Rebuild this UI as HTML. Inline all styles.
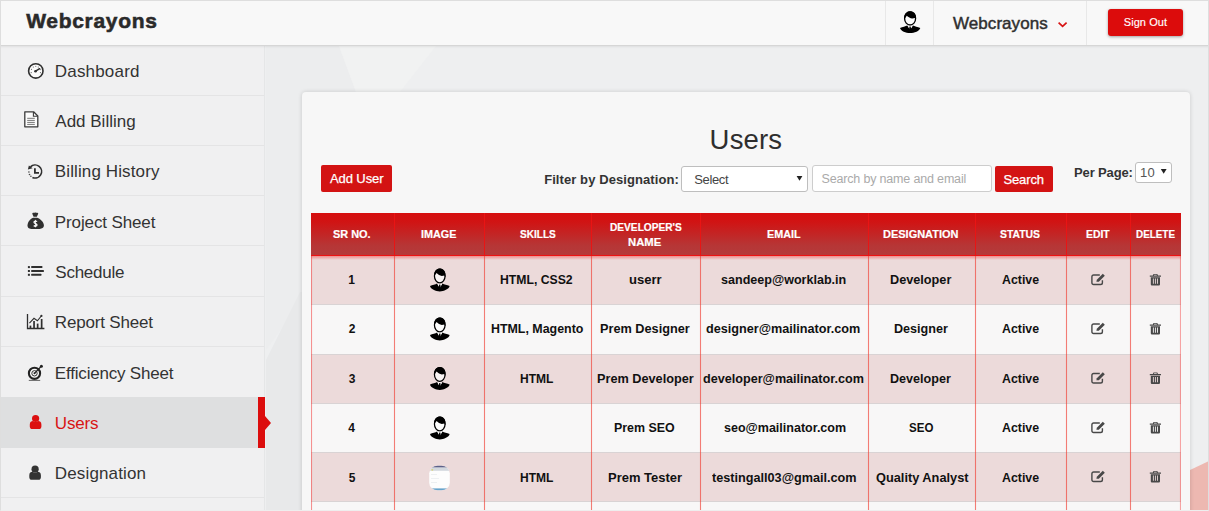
<!DOCTYPE html>
<html>
<head>
<meta charset="utf-8">
<title>Users</title>
<style>
*{box-sizing:border-box;margin:0;padding:0}
html,body{width:1209px;height:511px;overflow:hidden}
body{font-family:"Liberation Sans",sans-serif;background:#eeeff0;position:relative;color:#333}
.t{position:absolute;white-space:nowrap;z-index:20;font-family:"Liberation Sans",sans-serif}
#frame{position:absolute;left:0;top:0;width:1209px;height:511px;border:1px solid #dedede;border-bottom-color:#eee;z-index:60}
#bg{position:absolute;left:0;top:0;width:1209px;height:511px;z-index:0}
#top{position:absolute;left:0;top:0;width:1209px;height:46px;background:#f8f8f8;border-bottom:1px solid #d6d6d6;box-shadow:0 1px 2px rgba(0,0,0,.07);z-index:10}
.vsep{position:absolute;top:0;width:1px;height:45px;background:#e8e8e8}
#signout{position:absolute;left:1108px;top:9px;width:75px;height:27px;background:#dc0c0c;border-radius:3px;box-shadow:0 1px 3px rgba(0,0,0,.35)}
#side{position:absolute;left:0;top:46px;width:265px;height:465px;background:#f0f0f1;border-right:1px solid #e5e6e7;z-index:5}
.sb{position:absolute;left:0;width:264px;height:1px;background:#e4e4e5}
#act{position:absolute;left:0;top:351px;width:259px;height:51px;background:#dedfe0}
#actbar{position:absolute;left:258px;top:351px;width:7px;height:51px;background:#dc0d0d}
#acttri{position:absolute;left:265px;top:370px;width:0;height:0;border-left:6px solid #dc0d0d;border-top:7px solid transparent;border-bottom:7px solid transparent;z-index:7}
#card{position:absolute;left:302px;top:92px;width:888px;height:430px;background:#f7f7f7;border-radius:4px;box-shadow:0 0 4px rgba(0,0,0,.16);z-index:4}
.btn{position:absolute;background:#d31313;border-radius:2px;z-index:6}
.inp{position:absolute;background:#fff;border:1px solid #bebebe;border-radius:3px;z-index:6}
#tbl{position:absolute;left:311px;top:213px;width:870px;height:298px;z-index:6;overflow:hidden}
#thead{position:absolute;left:0;top:0;width:870px;height:42px;background:linear-gradient(#d60e0e 0%,#d01414 22%,#b63636 78%,#b53a3a 100%)}
#thline{position:absolute;left:0;top:42px;width:870px;height:1px;background:#ee1212}
#thsh{position:absolute;left:0;top:43px;width:870px;height:4px;background:linear-gradient(rgba(238,80,80,.55),rgba(238,120,120,0));z-index:7}
.row{position:absolute;left:0;width:870px}
.odd{background:#ecdada}
.even{background:#f8f7f7}
.hl{position:absolute;left:0;width:870px;height:1px;background:#d9d3d4;z-index:7}
.vh{position:absolute;top:0;width:1px;height:43px;background:#ea1414;z-index:9}
.vl{position:absolute;top:43px;width:1px;height:255px;background:rgba(240,60,50,.66);box-shadow:0 0 1px rgba(240,100,90,.4);z-index:8}
svg{position:absolute;z-index:21;overflow:visible}
</style>
</head>
<body>
<svg id="bg" width="1209" height="511" viewBox="0 0 1209 511">
  <rect width="1209" height="511" fill="#eeeff0"/>
  <polygon points="266,46 339,46 356,92 302,92 302,300 266,350" fill="#ecedee"/>
  <polygon points="339,46 436,46 400,92 356,92" fill="#f1f2f2"/>
  <polygon points="266,360 300,292 302,292 302,511 266,511" fill="#e8e9ea"/>
  <polygon points="1190,470 1209,461 1209,511 1190,511" fill="#edb8b1"/>
</svg>
<div id="frame"></div>
<div id="top">
  <div class="vsep" style="left:885px"></div>
  <div class="vsep" style="left:933px"></div>
  <div class="vsep" style="left:1086px"></div>
  <div id="signout"></div>
</div>
<div id="side">
  <div id="act"></div>
  <div id="actbar"></div>
  <div class="sb" style="top:49px"></div>
  <div class="sb" style="top:99px"></div>
  <div class="sb" style="top:149px"></div>
  <div class="sb" style="top:199px"></div>
  <div class="sb" style="top:250px"></div>
  <div class="sb" style="top:300px"></div>
  <div class="sb" style="top:451px"></div>
</div>
<div id="acttri" style="top:416px"></div>
<div id="card"></div>
<div class="btn" style="left:321px;top:165px;width:71px;height:27px"></div>
<div class="inp" style="left:681px;top:166px;width:127px;height:26px"></div>
<div class="inp" style="left:812px;top:165px;width:180px;height:27px;border-color:#cdcdcd"></div>
<div class="btn" style="left:995px;top:166px;width:58px;height:26px"></div>
<div class="inp" style="left:1135px;top:162px;width:37px;height:21px"></div>
<div id="tbl">
  <div id="thead"></div><div id="thline"></div><div id="thsh"></div>
  <div class="row odd" style="top:43px;height:49px"></div>
  <div class="row even" style="top:92px;height:49px"></div>
  <div class="row odd" style="top:141px;height:50px"></div>
  <div class="row even" style="top:191px;height:49px"></div>
  <div class="row odd" style="top:240px;height:49px"></div>
  <div class="row even" style="top:289px;height:49px"></div>
  <div class="hl" style="top:91px"></div>
  <div class="hl" style="top:141px"></div>
  <div class="hl" style="top:190px"></div>
  <div class="hl" style="top:239px"></div>
  <div class="hl" style="top:288px"></div>
  <div class="vh" style="left:83px"></div>
  <div class="vh" style="left:173px"></div>
  <div class="vh" style="left:280px"></div>
  <div class="vh" style="left:389px"></div>
  <div class="vh" style="left:557px"></div>
  <div class="vh" style="left:664px"></div>
  <div class="vh" style="left:755px"></div>
  <div class="vh" style="left:819px"></div>
  <div class="vl" style="left:0;background:rgba(243,60,60,.55)"></div>
  <div class="vl" style="left:83px"></div>
  <div class="vl" style="left:173px"></div>
  <div class="vl" style="left:280px"></div>
  <div class="vl" style="left:389px"></div>
  <div class="vl" style="left:557px"></div>
  <div class="vl" style="left:664px"></div>
  <div class="vl" style="left:755px"></div>
  <div class="vl" style="left:819px"></div>
  <div class="vl" style="left:869px;background:rgba(243,60,60,.45)"></div>
</div>
<svg id="ico" width="1209" height="511" viewBox="0 0 1209 511" style="left:0;top:0">
<defs>
  <g id="av">
    <!-- avatar in local coords: width 20.4 (0..20.4), height 21.6 (0..21.6) -->
    <ellipse cx="10.1" cy="7.1" rx="5.5" ry="6.5" fill="#fff" fill-opacity=".7" stroke="#000" stroke-width="1.3"/>
    <path d="M4.3,8.4 C3.4,1.6 7.6,-0.1 10.1,-0.1 C13.2,-0.1 17,1.8 15.9,8.4 L14.9,6.6 L12.2,7 C10.3,6.8 8.3,5.7 6.8,4.3 C5.7,5.4 4.9,6.9 4.3,8.4 Z" fill="#000"/>
    <path d="M0,16.6 C2.6,15.5 5.6,15.1 7.3,14.2 L10.1,18 L12.9,14.2 C14.6,15.1 17.6,15.5 20.3,16.6 C19.6,19.6 14.4,21.6 10.1,21.6 C5.8,21.6 0.7,19.6 0,16.6 Z" fill="#000"/>
    <path d="M7.6,14.3 L10.1,18.6 L12.6,14.3 L11.4,14.9 L10.1,14.4 L8.8,14.9 Z" fill="#fff"/>
    <path d="M9.5,15.1 h1.2 l0.5,3.3 l-1.1,1.1 l-1.1,-1.1 z" fill="#000"/>
  </g>
  <g id="usr">
    <!-- FA user-like: local 0..11.6 x 0..14.2 -->
    <circle cx="5.8" cy="3.6" r="3.6"/>
    <path d="M0,9.6 C0,6.9 1.6,6.1 3.2,6.1 C4,6.7 4.8,7.1 5.8,7.1 C6.8,7.1 7.6,6.7 8.4,6.1 C10,6.1 11.6,6.9 11.6,9.6 V11.6 C11.6,13.3 10.5,14.2 9.2,14.2 H2.4 C1.1,14.2 0,13.3 0,11.6 Z"/>
  </g>
  <g id="edit" fill="none" stroke="#484848">
    <!-- local 0..14.3 x 0..11.5 -->
    <path d="M11.2,6.8 V9.2 C11.2,10.3 10.4,11 9.4,11 H2.4 C1.4,11 0.7,10.3 0.7,9.2 V3.2 C0.7,2.2 1.4,1.5 2.4,1.5 H8.6" stroke-width="1.4"/>
    <path d="M5.2,8.3 L5.6,6.2 L11.6,0.3 L13.6,2.3 L7.6,8.2 Z" fill="#484848" stroke="none"/>
  </g>
  <g id="trash" fill="#484848">
    <path d="M3.7,0 h3.8 l0.7,1.5 h3 v1.4 h-11.2 v-1.4 h3 z M4.4,0.8 l-0.3,0.7 h3 l-0.3,-0.7 z" fill-rule="evenodd"/>
    <path d="M1,3.4 h9.2 v6.9 c0,0.8 -0.6,1.3 -1.3,1.3 h-6.6 c-0.7,0 -1.3,-0.5 -1.3,-1.3 z M3.1,4.6 v5.2 h0.9 v-5.2 z M5.15,4.6 v5.2 h0.9 v-5.2 z M7.2,4.6 v5.2 h0.9 v-5.2 z" fill-rule="evenodd"/>
  </g>
</defs>
<!-- top bar -->
<use href="#av" transform="translate(900,11.4)"/>
<path d="M1058.6,22.6 L1062.6,26.4 L1066.6,22.6" fill="none" stroke="#d81414" stroke-width="1.7"/>
<!-- sidebar: dashboard -->
<circle cx="35.8" cy="70.9" r="7.2" fill="#fbfbfb" stroke="#2f2f2f" stroke-width="1.6"/>
<g fill="#555"><circle cx="31.2" cy="72.6" r=".55"/><circle cx="31.5" cy="69.3" r=".55"/><circle cx="33.3" cy="67" r=".55"/><circle cx="35.8" cy="66.2" r=".55"/><circle cx="38.3" cy="67" r=".55"/><circle cx="40.4" cy="72.6" r=".55"/><circle cx="40.2" cy="69.6" r=".55"/></g>
<path d="M35.6,71.2 L39.6,68.7" stroke="#2f2f2f" stroke-width="1.5" stroke-linecap="round"/>
<circle cx="35.5" cy="71.2" r="1.3" fill="#2f2f2f"/>
<!-- add billing doc -->
<path d="M24.8,111.8 H33.6 L37.8,116 V126.8 H24.8 Z" fill="#fcfcfc" stroke="#3a3a3a" stroke-width="1.3" stroke-linejoin="round"/>
<path d="M33.4,112 V116.3 H37.7" fill="none" stroke="#3a3a3a" stroke-width="1.1"/>
<g stroke="#666" stroke-width=".9"><path d="M27.2,118.3 H34.8"/><path d="M27.2,120.4 H34.8"/><path d="M27.2,122.4 H34.8"/><path d="M27.2,124.4 H34.8"/></g>
<!-- billing history -->
<path d="M30.5,166.9 A6.5,6.5 0 1 1 32.4,177.4" fill="none" stroke="#2f2f2f" stroke-width="1.6"/>
<path d="M27.9,169.6 L28.9,165.4 L32.6,168.3 Z" fill="#2f2f2f"/>
<g fill="#444"><circle cx="28.9" cy="172" r=".8"/><circle cx="29.5" cy="174.5" r=".8"/><circle cx="30.9" cy="176.3" r=".8"/></g>
<path d="M34.9,168.2 V172.8 H39" fill="none" stroke="#2f2f2f" stroke-width="1.8"/>
<!-- project sheet money bag -->
<path d="M32.2,213.4 C33.4,212.2 34.4,213.4 35.2,212.3 C36,213.4 37,212.2 38.3,213.4 C37.8,214.8 37.2,215.8 36.8,216.8 H33.6 C33.2,215.8 32.6,214.8 32.2,213.4 Z" fill="#2f2f2f"/>
<path d="M33.2,217.8 H37.2 C40.8,219 43.9,222.4 43.9,225.6 C43.9,228 42,228.9 39.6,228.9 H31.2 C28.6,228.9 27.5,227.6 27.5,225.6 C27.5,222.4 29.8,219 33.2,217.8 Z" fill="#2f2f2f"/>
<path d="M37,221.7 C36.3,220.9 34,220.8 34,222.3 C34,223.9 37,223.3 37,225 C37,226.5 34.5,226.4 33.8,225.5" fill="none" stroke="#fff" stroke-width="1.25"/><path d="M35.5,219.9 V227.3" stroke="#fff" stroke-width=".8"/>
<!-- schedule list -->
<g fill="#2f2f2f"><rect x="27.9" y="266.1" width="2" height="2"/><rect x="27.9" y="270" width="2" height="2"/><rect x="27.9" y="273.8" width="2" height="2"/>
<rect x="31.2" y="266.1" width="11.2" height="2" rx=".5"/><rect x="31.2" y="270" width="12.7" height="2" rx=".5"/><rect x="31.2" y="273.8" width="10.2" height="2" rx=".5"/></g>
<!-- report chart -->
<path d="M27.5,314 V328.5 H44.4" fill="none" stroke="#2f2f2f" stroke-width="1.3"/>
<g fill="#2f2f2f"><rect x="29.6" y="325.6" width="1.7" height="3"/><rect x="33.2" y="321" width="1.7" height="7.6"/><rect x="36.8" y="323.6" width="1.7" height="5"/><rect x="40.8" y="319" width="1.7" height="9.6"/></g>
<path d="M29.4,323.2 L34,318.3 L37.4,320.8 L41.3,316" fill="none" stroke="#2f2f2f" stroke-width="1.1"/>
<circle cx="41.4" cy="315.9" r="1.1" fill="#2f2f2f"/>
<!-- efficiency target -->
<circle cx="34.5" cy="373.3" r="5.6" fill="#fafafa" stroke="#222" stroke-width="2.1"/>
<circle cx="34.5" cy="373.3" r="2.7" fill="none" stroke="#333" stroke-width="1"/>
<circle cx="34.5" cy="373.3" r="1" fill="#222"/>
<path d="M34.8,373 L41.2,366.4" stroke="#222" stroke-width="1.2"/>
<circle cx="41.4" cy="366.2" r="1.5" fill="#222"/>
<path d="M28.8,380.4 H40.2" stroke="#555" stroke-width=".9"/>
<!-- users / designation -->
<use href="#usr" transform="translate(29.8,414.9)" fill="#dc1010"/>
<use href="#usr" transform="translate(29.3,465.6)" fill="#333"/>
<path d="M796.6,176 H802.4 L799.5,180.8 Z" fill="#222"/>
<path d="M1160.8,169 H1166.6 L1163.7,173.8 Z" fill="#222"/>
<use href="#av" transform="translate(430,268.5) scale(0.966,1.06)"/>
<use href="#edit" transform="translate(1091.2,273.5)"/>
<use href="#trash" transform="translate(1149.8,273.9)"/>
<use href="#av" transform="translate(430,317.5) scale(0.966,1.06)"/>
<use href="#edit" transform="translate(1091.2,322.5)"/>
<use href="#trash" transform="translate(1149.8,322.9)"/>
<use href="#av" transform="translate(430,367.0) scale(0.966,1.06)"/>
<use href="#edit" transform="translate(1091.2,372.0)"/>
<use href="#trash" transform="translate(1149.8,372.4)"/>
<use href="#av" transform="translate(430,416.5) scale(0.966,1.06)"/>
<use href="#edit" transform="translate(1091.2,421.5)"/>
<use href="#trash" transform="translate(1149.8,421.9)"/>
<use href="#edit" transform="translate(1091.2,470.5)"/>
<use href="#trash" transform="translate(1149.8,470.9)"/>
<g><clipPath id="cp5"><rect x="429.2" y="465.8" width="20.6" height="24.4" rx="8.5" ry="7.5"/></clipPath>
<g clip-path="url(#cp5)"><rect x="428" y="465" width="24" height="26" fill="#fdfdfd"/><rect x="428" y="465" width="24" height="2.6" fill="#5d6188"/><rect x="428" y="467.6" width="24" height="3.2" fill="#d3d8de"/><rect x="431.5" y="469.2" width="1.6" height="1.4" fill="#d9d36a"/><rect x="428" y="488.4" width="24" height="2.4" fill="#66a3cb"/><rect x="431" y="474" width="6" height="1" fill="#eef0f2"/><rect x="431" y="478" width="8" height="1" fill="#eef0f2"/><rect x="431" y="482" width="6" height="1" fill="#eceff1"/></g></g>
</svg>

<div class="t" id="logo" style="left:26.25px;top:7.82px;font-size:21px;line-height:25.2px;font-weight:bold;color:#2a2a2a;letter-spacing:0.674px;-webkit-text-stroke:0.55px #2a2a2a">Webcrayons</div>
<div class="t" id="uname" style="left:953.05px;top:13.91px;font-size:17px;line-height:20.4px;font-weight:normal;color:#2f2f2f;letter-spacing:0.051px;-webkit-text-stroke:0.45px #2f2f2f">Webcrayons</div>
<div class="t" id="so" style="left:1123.75px;top:15.59px;font-size:11px;line-height:13.2px;font-weight:normal;color:#ffffff;letter-spacing:0.071px;-webkit-text-stroke:0.15px #ffffff">Sign Out</div>
<div class="t" id="m1" style="left:54.85px;top:61.61px;font-size:17px;line-height:20.4px;font-weight:normal;color:#333;letter-spacing:0.178px">Dashboard</div>
<div class="t" id="m2" style="left:55.30px;top:111.91px;font-size:17px;line-height:20.4px;font-weight:normal;color:#333;letter-spacing:0.003px">Add Billing</div>
<div class="t" id="m3" style="left:54.85px;top:162.21px;font-size:17px;line-height:20.4px;font-weight:normal;color:#333;letter-spacing:0.114px">Billing History</div>
<div class="t" id="m4" style="left:54.85px;top:212.61px;font-size:17px;line-height:20.4px;font-weight:normal;color:#333;letter-spacing:-0.127px">Project Sheet</div>
<div class="t" id="m5" style="left:55.35px;top:262.91px;font-size:17px;line-height:20.4px;font-weight:normal;color:#333;letter-spacing:-0.264px">Schedule</div>
<div class="t" id="m6" style="left:54.85px;top:313.31px;font-size:17px;line-height:20.4px;font-weight:normal;color:#333;letter-spacing:-0.187px">Report Sheet</div>
<div class="t" id="m7" style="left:54.85px;top:363.61px;font-size:17px;line-height:20.4px;font-weight:normal;color:#333;letter-spacing:-0.194px">Efficiency Sheet</div>
<div class="t" id="m8" style="left:54.85px;top:414.01px;font-size:17px;line-height:20.4px;font-weight:normal;color:#d81414;letter-spacing:-0.165px">Users</div>
<div class="t" id="m9" style="left:54.85px;top:464.31px;font-size:17px;line-height:20.4px;font-weight:normal;color:#333;letter-spacing:0.139px">Designation</div>
<div class="t" id="title" style="left:709.60px;top:122.97px;font-size:27.5px;line-height:33.0px;font-weight:normal;color:#2e2e2e;letter-spacing:0.175px">Users</div>
<div class="t" id="adduser" style="left:330.00px;top:171.40px;font-size:13px;line-height:15.6px;font-weight:normal;color:#fff;letter-spacing:-0.100px;-webkit-text-stroke:0.25px #fff">Add User</div>
<div class="t" id="flt" style="left:544.15px;top:172.10px;font-size:13px;line-height:15.6px;font-weight:bold;color:#333;letter-spacing:0.084px">Filter by Designation:</div>
<div class="t" id="sel" style="left:694.25px;top:171.90px;font-size:13px;line-height:15.6px;font-weight:normal;color:#444;letter-spacing:-0.370px">Select</div>
<div class="t" id="ph" style="left:821.50px;top:171.67px;font-size:12.5px;line-height:15.0px;font-weight:normal;color:#aaaaaa;letter-spacing:-0.170px">Search by name and email</div>
<div class="t" id="srch" style="left:1003.40px;top:171.70px;font-size:13px;line-height:15.6px;font-weight:normal;color:#fff;letter-spacing:-0.108px;-webkit-text-stroke:0.25px #fff">Search</div>
<div class="t" id="pp" style="left:1074.05px;top:165.10px;font-size:13px;line-height:15.6px;font-weight:bold;color:#333;letter-spacing:-0.134px">Per Page:</div>
<div class="t" id="ten" style="left:1140.00px;top:165.00px;font-size:13px;line-height:15.6px;font-weight:normal;color:#555;letter-spacing:0.270px">10</div>
<div class="t" id="h1" style="left:333.25px;top:228.02px;font-size:11.5px;line-height:13.8px;font-weight:bold;color:#fff;letter-spacing:0.000px;-webkit-text-stroke:0.2px #fff;transform:scaleX(0.9493);transform-origin:0 0">SR NO.</div>
<div class="t" id="h2" style="left:421.20px;top:228.02px;font-size:11.5px;line-height:13.8px;font-weight:bold;color:#fff;letter-spacing:0.000px;-webkit-text-stroke:0.2px #fff;transform:scaleX(0.9401);transform-origin:0 0">IMAGE</div>
<div class="t" id="h3" style="left:519.65px;top:228.02px;font-size:11.5px;line-height:13.8px;font-weight:bold;color:#fff;letter-spacing:0.000px;-webkit-text-stroke:0.2px #fff;transform:scaleX(0.8758);transform-origin:0 0">SKILLS</div>
<div class="t" id="h4a" style="left:609.50px;top:220.92px;font-size:11.5px;line-height:13.8px;font-weight:bold;color:#fff;letter-spacing:0.000px;-webkit-text-stroke:0.2px #fff;transform:scaleX(0.8828);transform-origin:0 0">DEVELOPER&#39;S</div>
<div class="t" id="h4b" style="left:628.25px;top:235.62px;font-size:11.5px;line-height:13.8px;font-weight:bold;color:#fff;letter-spacing:0.000px;-webkit-text-stroke:0.2px #fff;transform:scaleX(0.9800);transform-origin:0 0">NAME</div>
<div class="t" id="h5" style="left:766.50px;top:228.02px;font-size:11.5px;line-height:13.8px;font-weight:bold;color:#fff;letter-spacing:0.000px;-webkit-text-stroke:0.2px #fff;transform:scaleX(0.9383);transform-origin:0 0">EMAIL</div>
<div class="t" id="h6" style="left:883.25px;top:228.02px;font-size:11.5px;line-height:13.8px;font-weight:bold;color:#fff;letter-spacing:0.000px;-webkit-text-stroke:0.2px #fff;transform:scaleX(0.9554);transform-origin:0 0">DESIGNATION</div>
<div class="t" id="h7" style="left:999.85px;top:228.02px;font-size:11.5px;line-height:13.8px;font-weight:bold;color:#fff;letter-spacing:0.000px;-webkit-text-stroke:0.2px #fff;transform:scaleX(0.9040);transform-origin:0 0">STATUS</div>
<div class="t" id="h8" style="left:1086.00px;top:228.02px;font-size:11.5px;line-height:13.8px;font-weight:bold;color:#fff;letter-spacing:0.000px;-webkit-text-stroke:0.2px #fff;transform:scaleX(0.9057);transform-origin:0 0">EDIT</div>
<div class="t" id="h9" style="left:1135.70px;top:228.02px;font-size:11.5px;line-height:13.8px;font-weight:bold;color:#fff;letter-spacing:0.000px;-webkit-text-stroke:0.2px #fff;transform:scaleX(0.8589);transform-origin:0 0">DELETE</div>
<div class="t" id="r0c0" style="left:348.25px;top:272.94px;font-size:12px;line-height:14.4px;font-weight:bold;color:#111;letter-spacing:0.000px">1</div>
<div class="t" id="r0c1" style="left:500.45px;top:272.94px;font-size:12px;line-height:14.4px;font-weight:bold;color:#111;letter-spacing:0.000px;transform:scaleX(1.0181);transform-origin:0 0">HTML, CSS2</div>
<div class="t" id="r0c2" style="left:628.75px;top:272.94px;font-size:12px;line-height:14.4px;font-weight:bold;color:#111;letter-spacing:0.000px;transform:scaleX(1.0871);transform-origin:0 0">userr</div>
<div class="t" id="r0c3" style="left:721.30px;top:272.94px;font-size:12px;line-height:14.4px;font-weight:bold;color:#111;letter-spacing:0.000px;transform:scaleX(1.0462);transform-origin:0 0">sandeep@worklab.in</div>
<div class="t" id="r0c4" style="left:890.15px;top:272.94px;font-size:12px;line-height:14.4px;font-weight:bold;color:#111;letter-spacing:0.000px;transform:scaleX(1.0573);transform-origin:0 0">Developer</div>
<div class="t" id="r0c5" style="left:1002.25px;top:272.94px;font-size:12px;line-height:14.4px;font-weight:bold;color:#111;letter-spacing:0.000px;transform:scaleX(1.0287);transform-origin:0 0">Active</div>
<div class="t" id="r1c0" style="left:348.75px;top:322.44px;font-size:12px;line-height:14.4px;font-weight:bold;color:#111;letter-spacing:0.000px">2</div>
<div class="t" id="r1c1" style="left:491.15px;top:322.44px;font-size:12px;line-height:14.4px;font-weight:bold;color:#111;letter-spacing:0.000px;transform:scaleX(1.0338);transform-origin:0 0">HTML, Magento</div>
<div class="t" id="r1c2" style="left:599.95px;top:322.44px;font-size:12px;line-height:14.4px;font-weight:bold;color:#111;letter-spacing:0.000px;transform:scaleX(1.0596);transform-origin:0 0">Prem Designer</div>
<div class="t" id="r1c3" style="left:706.10px;top:322.44px;font-size:12px;line-height:14.4px;font-weight:bold;color:#111;letter-spacing:0.000px;transform:scaleX(1.0535);transform-origin:0 0">designer@mailinator.com</div>
<div class="t" id="r1c4" style="left:894.35px;top:322.44px;font-size:12px;line-height:14.4px;font-weight:bold;color:#111;letter-spacing:0.000px;transform:scaleX(1.0493);transform-origin:0 0">Designer</div>
<div class="t" id="r1c5" style="left:1002.25px;top:322.44px;font-size:12px;line-height:14.4px;font-weight:bold;color:#111;letter-spacing:0.000px;transform:scaleX(1.0287);transform-origin:0 0">Active</div>
<div class="t" id="r2c0" style="left:348.75px;top:371.94px;font-size:12px;line-height:14.4px;font-weight:bold;color:#111;letter-spacing:0.000px">3</div>
<div class="t" id="r2c1" style="left:520.15px;top:371.94px;font-size:12px;line-height:14.4px;font-weight:bold;color:#111;letter-spacing:0.000px;transform:scaleX(1.0018);transform-origin:0 0">HTML</div>
<div class="t" id="r2c2" style="left:596.65px;top:371.94px;font-size:12px;line-height:14.4px;font-weight:bold;color:#111;letter-spacing:0.000px;transform:scaleX(1.0584);transform-origin:0 0">Prem Developer</div>
<div class="t" id="r2c3" style="left:703.20px;top:371.94px;font-size:12px;line-height:14.4px;font-weight:bold;color:#111;letter-spacing:0.000px;transform:scaleX(1.0510);transform-origin:0 0">developer@mailinator.com</div>
<div class="t" id="r2c4" style="left:890.25px;top:371.94px;font-size:12px;line-height:14.4px;font-weight:bold;color:#111;letter-spacing:0.000px;transform:scaleX(1.0483);transform-origin:0 0">Developer</div>
<div class="t" id="r2c5" style="left:1002.25px;top:371.94px;font-size:12px;line-height:14.4px;font-weight:bold;color:#111;letter-spacing:0.000px;transform:scaleX(1.0287);transform-origin:0 0">Active</div>
<div class="t" id="r3c0" style="left:348.25px;top:421.24px;font-size:12px;line-height:14.4px;font-weight:bold;color:#111;letter-spacing:0.000px">4</div>
<div class="t" id="r3c1" style="left:614.35px;top:421.24px;font-size:12px;line-height:14.4px;font-weight:bold;color:#111;letter-spacing:0.000px;transform:scaleX(1.0349);transform-origin:0 0">Prem SEO</div>
<div class="t" id="r3c2" style="left:723.50px;top:421.24px;font-size:12px;line-height:14.4px;font-weight:bold;color:#111;letter-spacing:0.000px;transform:scaleX(1.0429);transform-origin:0 0">seo@mailinator.com</div>
<div class="t" id="r3c3" style="left:909.35px;top:421.24px;font-size:12px;line-height:14.4px;font-weight:bold;color:#111;letter-spacing:0.000px;transform:scaleX(0.9605);transform-origin:0 0">SEO</div>
<div class="t" id="r3c4" style="left:1002.25px;top:421.24px;font-size:12px;line-height:14.4px;font-weight:bold;color:#111;letter-spacing:0.000px;transform:scaleX(1.0287);transform-origin:0 0">Active</div>
<div class="t" id="r4c0" style="left:348.75px;top:470.54px;font-size:12px;line-height:14.4px;font-weight:bold;color:#111;letter-spacing:0.000px">5</div>
<div class="t" id="r4c1" style="left:520.15px;top:470.54px;font-size:12px;line-height:14.4px;font-weight:bold;color:#111;letter-spacing:0.000px;transform:scaleX(1.0018);transform-origin:0 0">HTML</div>
<div class="t" id="r4c2" style="left:608.15px;top:470.54px;font-size:12px;line-height:14.4px;font-weight:bold;color:#111;letter-spacing:0.000px;transform:scaleX(1.0810);transform-origin:0 0">Prem Tester</div>
<div class="t" id="r4c3" style="left:711.60px;top:470.54px;font-size:12px;line-height:14.4px;font-weight:bold;color:#111;letter-spacing:0.000px;transform:scaleX(1.0548);transform-origin:0 0">testingall03@gmail.com</div>
<div class="t" id="r4c4" style="left:875.70px;top:470.54px;font-size:12px;line-height:14.4px;font-weight:bold;color:#111;letter-spacing:0.000px;transform:scaleX(1.0643);transform-origin:0 0">Quality Analyst</div>
<div class="t" id="r4c5" style="left:1002.25px;top:470.54px;font-size:12px;line-height:14.4px;font-weight:bold;color:#111;letter-spacing:0.000px;transform:scaleX(1.0287);transform-origin:0 0">Active</div>
</body>
</html>
